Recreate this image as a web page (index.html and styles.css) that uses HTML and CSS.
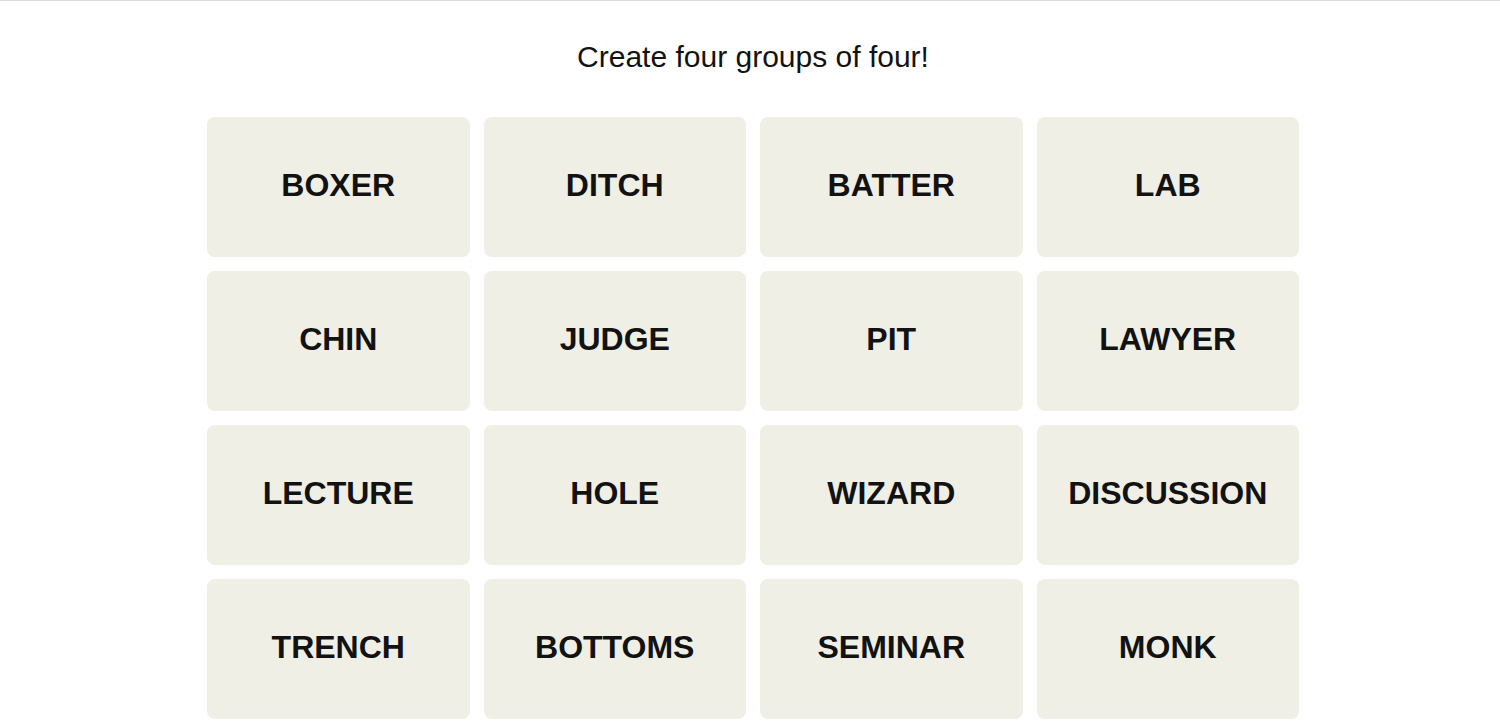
FILE: index.html
```html
<!DOCTYPE html>
<html lang="en">
<head>
  <meta charset="UTF-8">
  <meta name="viewport" content="width=device-width, initial-scale=1.0">
  <title>Connections</title>
  <link rel="stylesheet" href="styles.css">
</head>
<body>
  <div class="page">
    <p class="prompt">Create four groups of four!</p>
    <div class="board">
      <button class="card">BOXER</button>
      <button class="card">DITCH</button>
      <button class="card">BATTER</button>
      <button class="card">LAB</button>
      <button class="card">CHIN</button>
      <button class="card">JUDGE</button>
      <button class="card">PIT</button>
      <button class="card">LAWYER</button>
      <button class="card">LECTURE</button>
      <button class="card">HOLE</button>
      <button class="card">WIZARD</button>
      <button class="card">DISCUSSION</button>
      <button class="card">TRENCH</button>
      <button class="card">BOTTOMS</button>
      <button class="card">SEMINAR</button>
      <button class="card">MONK</button>
    </div>
  </div>
</body>
</html>
```

FILE: styles.css
```css
body {
  margin: 0;
  background-color: #ffffff;
  font-family: "Liberation Sans", Arial, sans-serif;
  color: #121212;
  border-top: 1px solid #dcdcdc;
}

.page {
  width: 1092px;
  margin: 0 auto;
  padding-left: 6px;
}

.prompt {
  margin: 38px 0 0;
  font-size: 30px;
  line-height: 36px;
  text-align: center;
}

.board {
  display: grid;
  grid-template-columns: repeat(4, 1fr);
  grid-auto-rows: 140px;
  gap: 14px;
  margin-top: 42px;
}

.card {
  border: none;
  border-radius: 8px;
  background-color: #efefe6;
  color: #121212;
  font-family: "Liberation Sans", Arial, sans-serif;
  font-size: 32px;
  font-weight: 700;
  padding: 0 0 4px;
  cursor: pointer;
}
```
